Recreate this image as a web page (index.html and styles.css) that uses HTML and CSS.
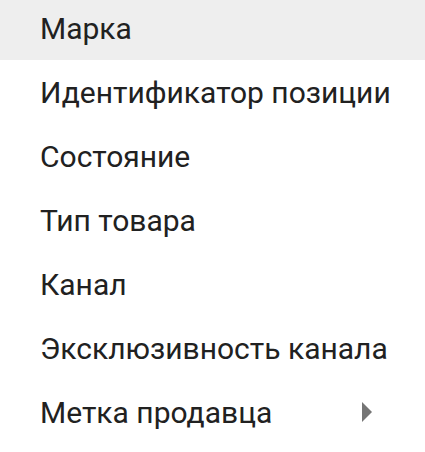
FILE: index.html
```html
<!DOCTYPE html>
<html lang="ru">
<head>
<meta charset="utf-8">
<link rel="stylesheet" href="styles.css">
</head>
<body>
<ul class="menu">
  <li class="item active"><span class="label">Марка</span></li>
  <li class="item"><span class="label">Идентификатор позиции</span></li>
  <li class="item"><span class="label">Состояние</span></li>
  <li class="item"><span class="label">Тип товара</span></li>
  <li class="item"><span class="label">Канал</span></li>
  <li class="item"><span class="label">Эксклюзивность канала</span></li>
  <li class="item"><span class="label">Метка продавца</span>
    <svg class="arrow" viewBox="0 0 24 24" width="48" height="48"><path d="M10 17l5-5-5-5v10z" fill="#757575"/></svg>
  </li>
</ul>
</body>
</html>
```
FILE: styles.css
```css
html, body {
  margin: 0;
  padding: 0;
  background: #ffffff;
}
body {
  font-family: Roboto, "Noto Sans", sans-serif;
  overflow: hidden;
}
.menu {
  list-style: none;
  margin: -4px 0 0 0;
  padding: 0;
}
.item {
  height: 64px;
  display: flex;
  align-items: center;
  padding-left: 40px;
  padding-right: 35px;
  font-size: 30px;
  color: #212121;
}
.item.active {
  background: #eeeeee;
}
.label {
  flex: 1;
  white-space: nowrap;
}
.arrow {
  flex: none;
  display: block;
}
```
